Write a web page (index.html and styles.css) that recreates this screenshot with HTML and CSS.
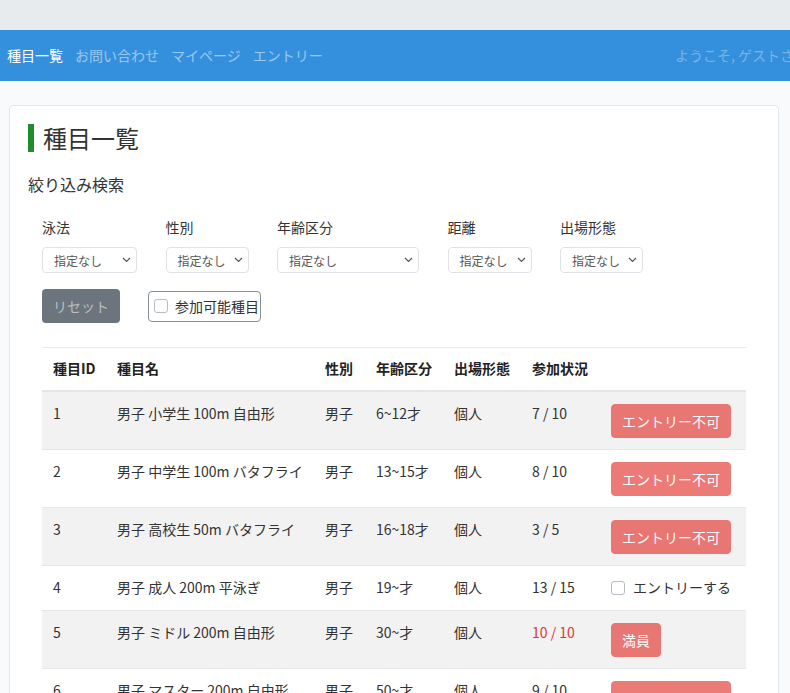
FILE: index.html
```html
<!DOCTYPE html>
<html lang="ja">
<head>
<meta charset="utf-8">
<title>種目一覧</title>
<link rel="stylesheet" href="styles.css">
</head>
<body>
<div class="topband"></div>
<nav class="navbar">
  <div class="nav-inner">
    <a class="nav-link active">種目一覧</a>
    <a class="nav-link">お問い合わせ</a>
    <a class="nav-link">マイページ</a>
    <a class="nav-link">エントリー</a>
    <span class="nav-user">ようこそ, ゲストさん</span>
  </div>
</nav>
<main class="main">
  <section class="card">
    <h1 class="page-title">種目一覧</h1>
    <h2 class="sub-title">絞り込み検索</h2>
    <div class="filters">
      <div class="filter-row">
        <div class="filter">
          <label class="filter-label">泳法</label>
          <div class="select w95"><span>指定なし</span><svg width="9" height="6" viewBox="0 0 9 6"><polyline points="1,1 4.5,4.5 8,1" fill="none" stroke="#555" stroke-width="1.2"/></svg></div>
        </div>
        <div class="filter">
          <label class="filter-label">性別</label>
          <div class="select w83"><span>指定なし</span><svg width="9" height="6" viewBox="0 0 9 6"><polyline points="1,1 4.5,4.5 8,1" fill="none" stroke="#555" stroke-width="1.2"/></svg></div>
        </div>
        <div class="filter">
          <label class="filter-label">年齢区分</label>
          <div class="select w142"><span>指定なし</span><svg width="9" height="6" viewBox="0 0 9 6"><polyline points="1,1 4.5,4.5 8,1" fill="none" stroke="#555" stroke-width="1.2"/></svg></div>
        </div>
        <div class="filter">
          <label class="filter-label">距離</label>
          <div class="select w84"><span>指定なし</span><svg width="9" height="6" viewBox="0 0 9 6"><polyline points="1,1 4.5,4.5 8,1" fill="none" stroke="#555" stroke-width="1.2"/></svg></div>
        </div>
        <div class="filter">
          <label class="filter-label">出場形態</label>
          <div class="select w83"><span>指定なし</span><svg width="9" height="6" viewBox="0 0 9 6"><polyline points="1,1 4.5,4.5 8,1" fill="none" stroke="#555" stroke-width="1.2"/></svg></div>
        </div>
      </div>
      <div class="action-row">
        <button class="btn-reset">リセット</button>
        <label class="check-box"><input type="checkbox" class="cb"><span>参加可能種目</span></label>
      </div>
    </div>
    <table class="events">
      <colgroup>
        <col class="c1"><col class="c2"><col class="c3"><col class="c4"><col class="c5"><col class="c6"><col class="c7">
      </colgroup>
      <thead>
        <tr>
          <th>種目ID</th>
          <th>種目名</th>
          <th>性別</th>
          <th>年齢区分</th>
          <th>出場形態</th>
          <th>参加状況</th>
          <th></th>
        </tr>
      </thead>
      <tbody>
        <tr class="stripe">
          <td>1</td><td>男子 小学生 100m 自由形</td><td>男子</td><td>6~12才</td><td>個人</td><td>7 / 10</td>
          <td><button class="btn-danger">エントリー不可</button></td>
        </tr>
        <tr>
          <td>2</td><td>男子 中学生 100m バタフライ</td><td>男子</td><td>13~15才</td><td>個人</td><td>8 / 10</td>
          <td><button class="btn-danger">エントリー不可</button></td>
        </tr>
        <tr class="stripe">
          <td>3</td><td>男子 高校生 50m バタフライ</td><td>男子</td><td>16~18才</td><td>個人</td><td>3 / 5</td>
          <td><button class="btn-danger">エントリー不可</button></td>
        </tr>
        <tr>
          <td>4</td><td>男子 成人 200m 平泳ぎ</td><td>男子</td><td>19~才</td><td>個人</td><td>13 / 15</td>
          <td><label class="entry-check"><input type="checkbox" class="cb"><span>エントリーする</span></label></td>
        </tr>
        <tr class="stripe">
          <td>5</td><td>男子 ミドル 200m 自由形</td><td>男子</td><td>30~才</td><td>個人</td><td class="full">10 / 10</td>
          <td><button class="btn-danger">満員</button></td>
        </tr>
        <tr>
          <td>6</td><td>男子 マスター 200m 自由形</td><td>男子</td><td>50~才</td><td>個人</td><td>9 / 10</td>
          <td><button class="btn-danger">エントリー不可</button></td>
        </tr>
      </tbody>
    </table>
  </section>
</main>
</body>
</html>
```
FILE: styles.css
```css
html, body {
  margin: 0;
  padding: 0;
  overflow: hidden;
}
body {
  font-family: "Noto Sans CJK JP", "Noto Sans", sans-serif;
  color: #333;
  background: #f8fafc;
  font-size: 14px;
  line-height: 21px;
}
.topband {
  height: 30px;
  background: #e8ebee;
}
.navbar {
  height: 51px;
  background: #3490dc;
  overflow: hidden;
}
.nav-inner {
  width: 840px;
  display: flex;
  align-items: center;
  height: 100%;
}
.nav-link {
  padding: 0 6px;
  font-size: 14px;
  color: rgba(255, 255, 255, 0.5);
  white-space: nowrap;
}
.nav-link:first-child {
  padding-left: 7px;
}
.nav-link.active {
  color: #fff;
}
.nav-user {
  margin-left: auto;
  padding-right: 32px;
  color: rgba(255, 255, 255, 0.35);
  white-space: nowrap;
}
.main {
  padding: 24px 11px 0 9px;
}
.card {
  background: #fff;
  border: 1px solid #e3e6ea;
  border-radius: 4px;
  padding: 18px 18px 20px;
}
.page-title {
  margin: 0;
  font-size: 24px;
  font-weight: 400;
  line-height: 28px;
  border-left: 6px solid #208c2c;
  padding-left: 9px;
  color: #333;
}
.sub-title {
  margin: 20px 0 0;
  font-size: 16px;
  font-weight: 400;
  line-height: 24px;
  color: #333;
}
.filters {
  padding-left: 14px;
  margin-top: 21px;
}
.filter-row {
  display: flex;
  gap: 28.5px;
}
.filter {
  display: flex;
  flex-direction: column;
}
.filter-label {
  font-size: 14px;
  line-height: 21px;
  margin-bottom: 9px;
}
.select {
  box-sizing: border-box;
  height: 26px;
  border: 1px solid #dfe3e7;
  border-radius: 4px;
  display: flex;
  align-items: center;
  justify-content: space-between;
  padding: 0 4px 0 11px;
  font-size: 12px;
  color: #555;
}
.select svg {
  margin-right: 1px;
}
.w95 { width: 95px; }
.w83 { width: 83px; }
.w84 { width: 84px; }
.w142 { width: 142px; }
.action-row {
  display: flex;
  align-items: center;
  gap: 28px;
  margin-top: 16px;
}
.btn-reset {
  font-family: inherit;
  font-size: 14px;
  height: 34px;
  width: 78px;
  border: none;
  border-radius: 4px;
  background: #6c757d;
  color: #b9bec3;
  padding: 0;
}
.check-box {
  box-sizing: border-box;
  height: 31px;
  width: 113px;
  border: 1px solid #868e96;
  border-radius: 4px;
  display: flex;
  align-items: center;
  padding-left: 5px;
  gap: 7px;
  font-size: 14px;
  color: #333;
}
.cb {
  appearance: none;
  -webkit-appearance: none;
  margin: 0;
  width: 14px;
  height: 14px;
  border: 1px solid #b5bcc3;
  border-radius: 3px;
  background: #fff;
  flex-shrink: 0;
}
.events {
  margin: 24px 0 0 14px;
  width: 704px;
  border-collapse: collapse;
  table-layout: fixed;
}
.c1 { width: 64px; }
.c2 { width: 208px; }
.c3 { width: 51px; }
.c4 { width: 78px; }
.c5 { width: 78px; }
.c6 { width: 79px; }
.c7 { width: 146px; }
.events th {
  text-align: left;
  font-size: 14px;
  font-weight: 700;
  color: #222;
  padding: 10px 11px 11px;
  border-top: 1px solid #e8ebee;
  border-bottom: 2px solid #e3e6ea;
  white-space: nowrap;
}
.events td {
  vertical-align: top;
  padding: 11px 11px 12px;
  border-top: 1px solid #e3e6ea;
  white-space: nowrap;
}
.events tr.stripe td {
  background: #f2f2f2;
}
.full {
  color: #e3342f;
}
.btn-danger {
  font-family: inherit;
  font-size: 14px;
  height: 34px;
  padding: 0 10px;
  border: 1px solid #e3342f;
  border-radius: 4px;
  background: #e3342f;
  color: #fff;
  opacity: 0.65;
  display: block;
  margin-top: 1px;
  margin-bottom: -1px;
}
.entry-check {
  display: flex;
  align-items: center;
  gap: 8px;
}
```
